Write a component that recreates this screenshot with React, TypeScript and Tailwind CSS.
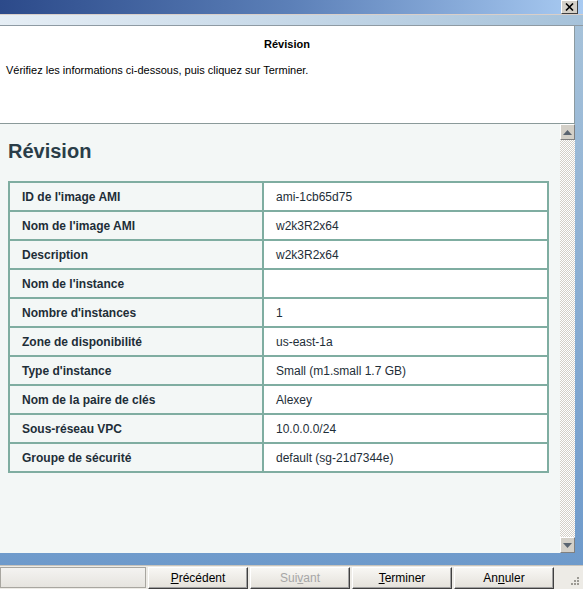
import React from "react";

const rows: [string, string][] = [
  ["ID de l'image AMI", "ami-1cb65d75"],
  ["Nom de l'image AMI", "w2k3R2x64"],
  ["Description", "w2k3R2x64"],
  ["Nom de l'instance", ""],
  ["Nombre d'instances", "1"],
  ["Zone de disponibilité", "us-east-1a"],
  ["Type d'instance", "Small (m1.small 1.7 GB)"],
  ["Nom de la paire de clés", "Alexey"],
  ["Sous-réseau VPC", "10.0.0.0/24"],
  ["Groupe de sécurité", "default (sg-21d7344e)"],
];

function WinButton({
  children,
  disabled,
}: {
  children: React.ReactNode;
  disabled?: boolean;
}) {
  return (
    <button
      className={`w-[100px] h-[22px] flex items-center justify-center text-[12px] bg-gradient-to-b from-[#f8f7f4] to-[#e4e1da] border border-t-white border-l-white border-r-[#404040] border-b-[#404040] shadow-[inset_-1px_-1px_0_#a0a0a0] ${
        disabled ? "text-[#a6a6a6]" : "text-black"
      }`}
    >
      {children}
    </button>
  );
}

export default function App() {
  return (
    <div
      className="w-[583px] h-[589px] overflow-hidden flex flex-col bg-[#86abd2]"
      style={{ fontFamily: "'Liberation Sans', Arial, sans-serif" }}
    >
      {/* title bar */}
      <div className="h-[14px] flex justify-end bg-gradient-to-r from-[#2c4a8a] via-[#5c80b8] to-[#a9cbf2]">
        <div className="w-[17px] h-[14px] mr-[5px] bg-[#d4d0c8] border border-t-white border-l-white border-r-[#404040] border-b-[#404040] flex items-center justify-center">
          <svg width="9" height="8" viewBox="0 0 9 8">
            <path d="M1 0.5 L8 7.5 M8 0.5 L1 7.5" stroke="#000" strokeWidth="1.6" />
          </svg>
        </div>
      </div>
      <div className="h-[12px] border-t border-[#d9cfc9] border-b border-b-[#8e9aa3] bg-gradient-to-r from-[#e6eef5] to-[#a6c2da]" />

      <div className="flex-1 flex flex-col pr-[8px] bg-gradient-to-b from-[#a6c2da] to-[#6e9acb]">
        {/* header panel */}
        <div className="h-[98px] bg-white border-r border-[#8c9aa0] border-b border-b-[#8a9a9a] pt-[10px] text-[11px] text-black">
          <div className="text-center font-bold">Révision</div>
          <div className="pl-[6px] mt-[9px]">
            Vérifiez les informations ci-dessous, puis cliquez sur Terminer.
          </div>
        </div>

        {/* content */}
        <div className="h-[429px] flex bg-[#f3f7f6]">
          <div className="flex-1 pl-[8px] pr-[11px]">
            <h1 className="text-[20px] font-bold text-[#2a3d48] mt-[15px] mb-[18px] leading-[24px]">
              Révision
            </h1>
            <div className="border-2 border-[#7fada1] border-b-0">
              {rows.map(([label, value]) => (
                <div key={label} className="flex h-[29px] border-b-2 border-[#7fada1]">
                  <div className="w-[254px] pl-[12px] flex items-center text-[12px] font-bold text-[#1e2e38] border-r-2 border-[#7fada1]">
                    {label}
                  </div>
                  <div className="flex-1 bg-white pl-[12px] flex items-center text-[12px] text-[#1e2e38]">
                    {value}
                  </div>
                </div>
              ))}
            </div>
          </div>
          {/* scrollbar */}
          <div className="w-[15px] flex flex-col">
            <div className="h-[16px] bg-[#d4d0c8] border border-t-white border-l-white border-r-[#808080] border-b-[#808080] flex items-center justify-center">
              <svg width="9" height="5" viewBox="0 0 9 5">
                <path d="M0 5 L4.5 0 L9 5 Z" fill="#5a6470" />
              </svg>
            </div>
            <div className="flex-1 bg-[repeating-conic-gradient(#d4d0c8_0_25%,#ffffff_0_50%)] bg-[length:2px_2px]" />
            <div className="h-[16px] bg-[#d4d0c8] border border-t-white border-l-white border-r-[#808080] border-b-[#808080] flex items-center justify-center">
              <svg width="9" height="5" viewBox="0 0 9 5">
                <path d="M0 0 L4.5 5 L9 0 Z" fill="#5a6470" />
              </svg>
            </div>
          </div>
        </div>

        <div className="h-[12px]" />
      </div>

      {/* button bar */}
      <div className="h-[24px] flex items-center gap-[2px] bg-[#edebe6] border-t border-[#c8c4bc]">
        <div className="w-[146px] h-[21px] border border-[#a8a6a0] bg-gradient-to-b from-[#f4f3f1] to-[#e6e4df]" />
        <WinButton>
          <span><u>P</u>récédent</span>
        </WinButton>
        <WinButton disabled>
          <span>Sui<u>v</u>ant</span>
        </WinButton>
        <WinButton>
          <span><u>T</u>erminer</span>
        </WinButton>
        <WinButton>
          <span>An<u>n</u>uler</span>
        </WinButton>
        <div className="flex-1 flex justify-end items-end h-full pr-[3px] pb-[3px]">
          <svg width="12" height="12" viewBox="0 0 12 12">
            {[
              [9, 1],
              [6, 4],
              [9, 4],
              [3, 7],
              [6, 7],
              [9, 7],
            ].map(([x, y]) => (
              <rect key={`${x}-${y}`} x={x} y={y + 2} width="2" height="2" fill="#9c9a94" />
            ))}
          </svg>
        </div>
      </div>
    </div>
  );
}
